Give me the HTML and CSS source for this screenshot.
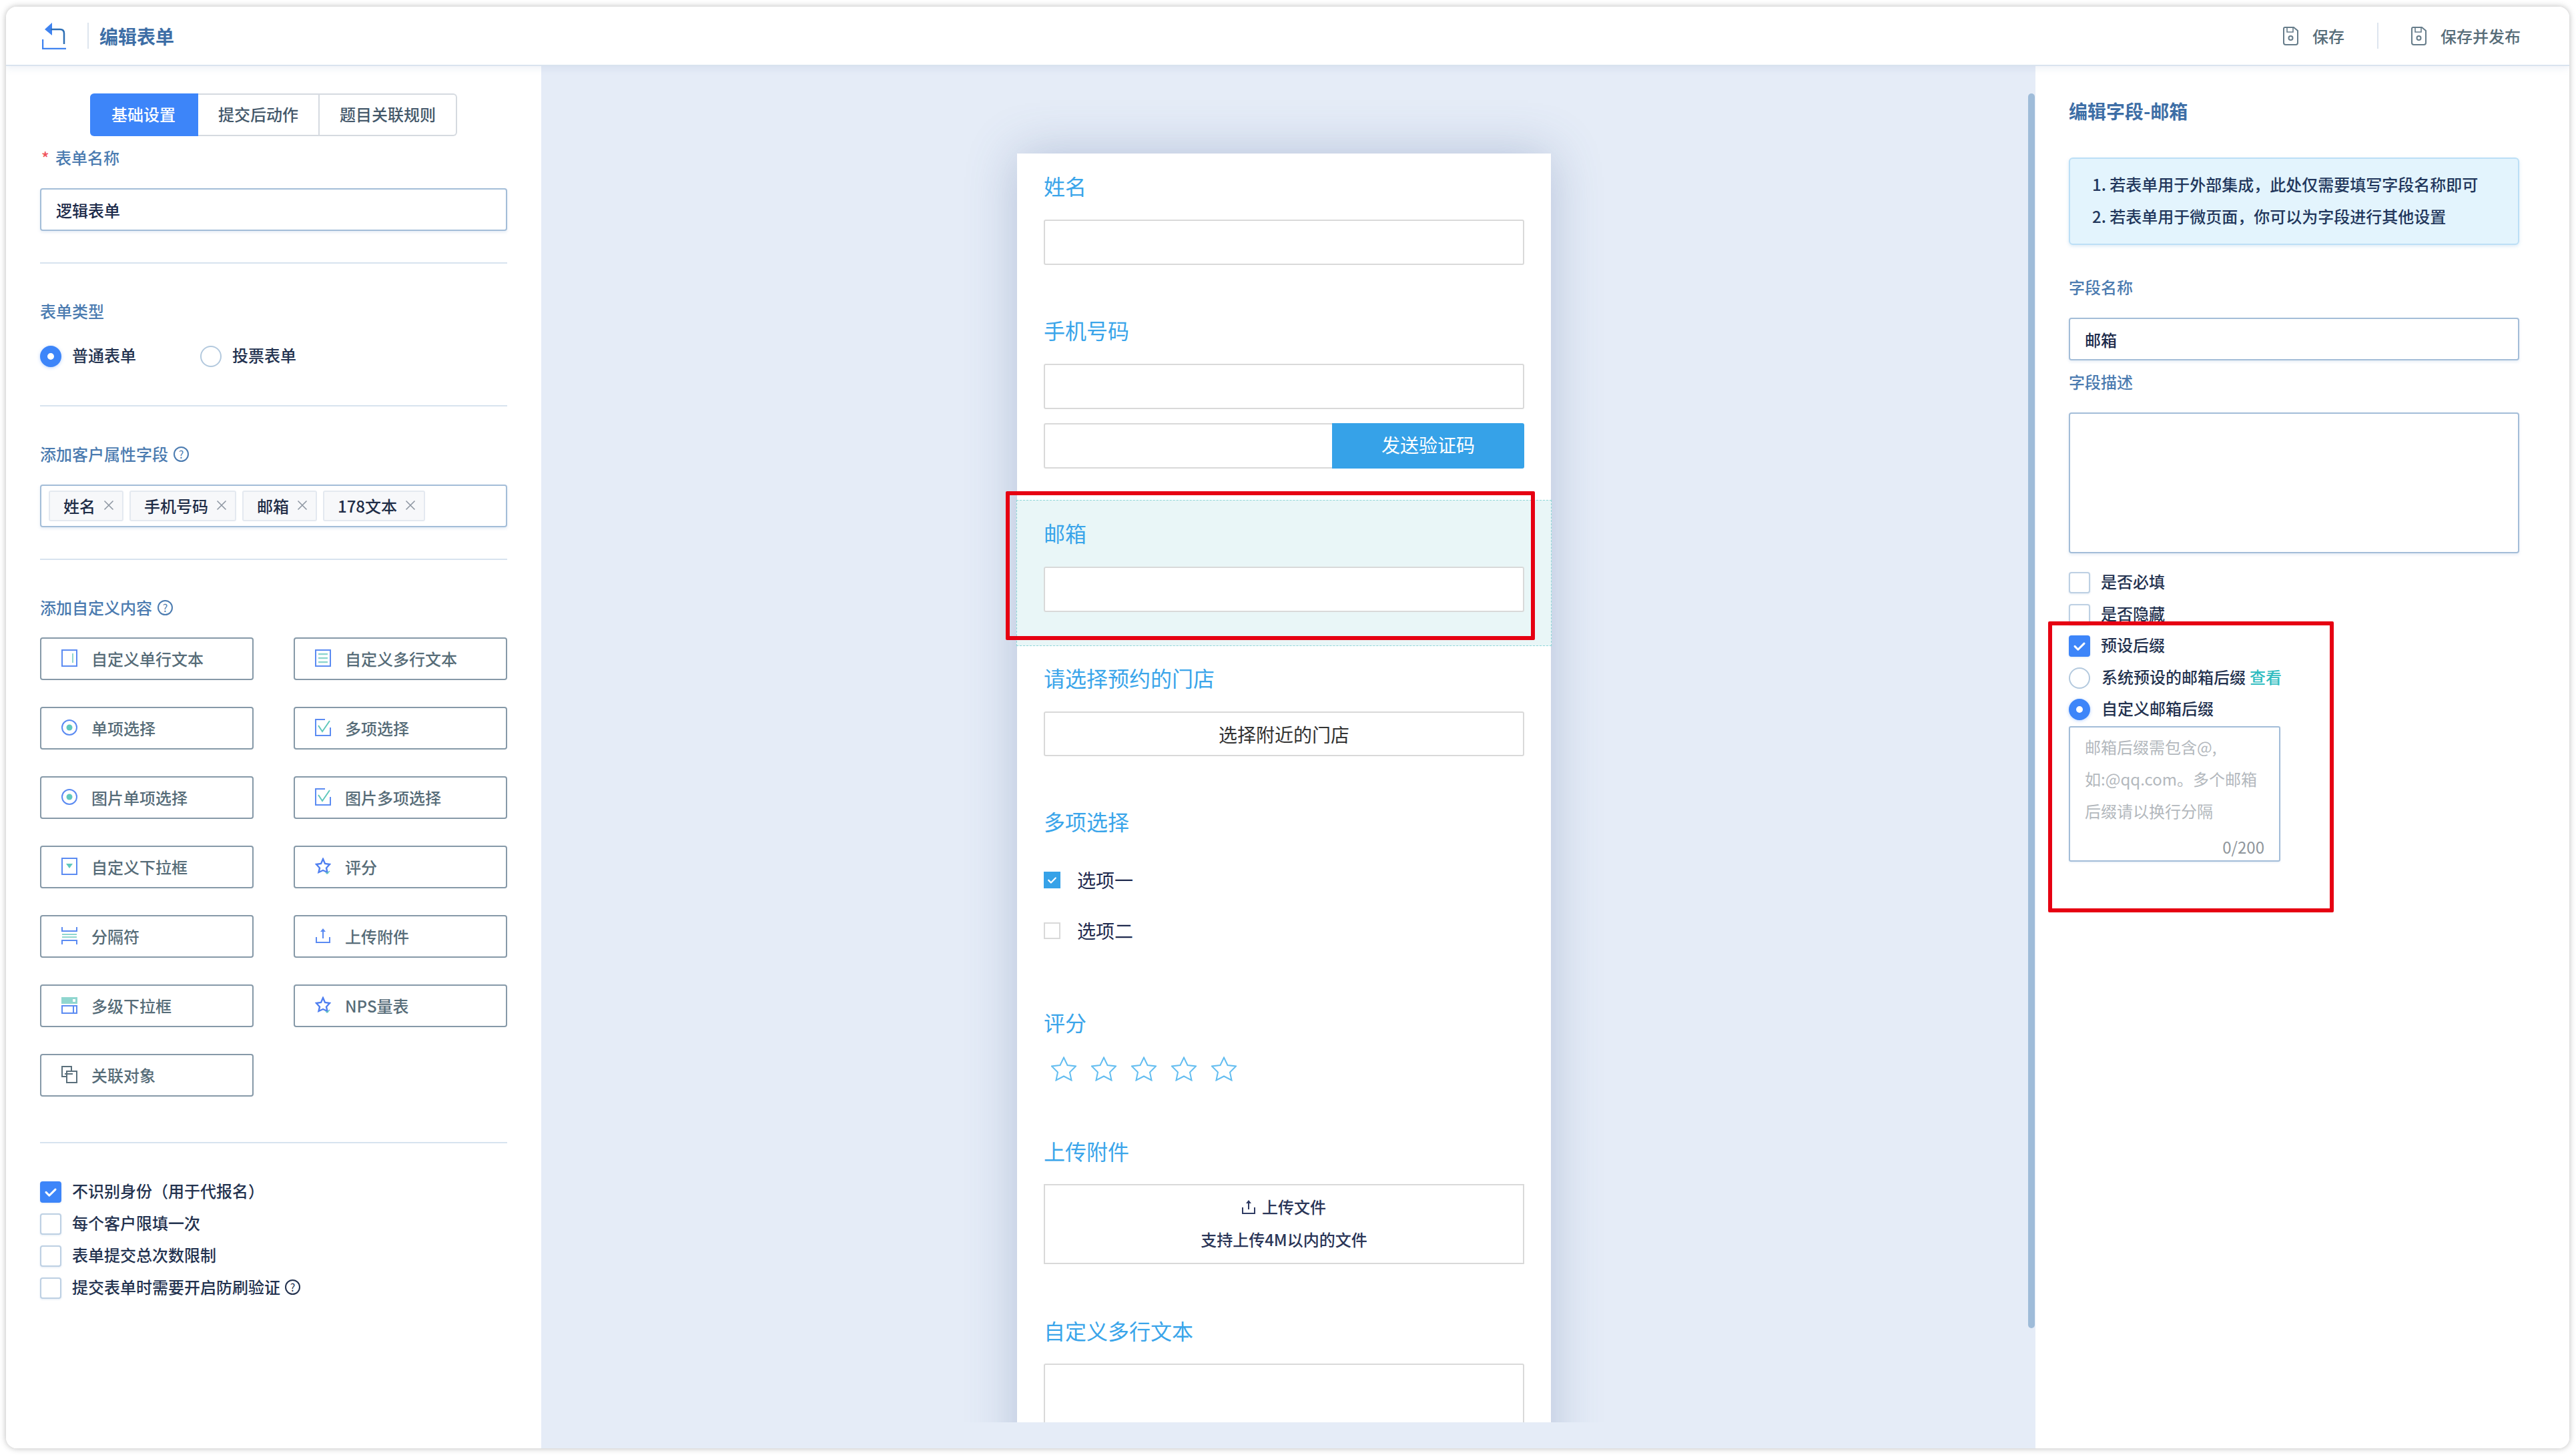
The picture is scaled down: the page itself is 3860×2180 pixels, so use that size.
FILE: index.html
```html
<!DOCTYPE html>
<html lang="zh-CN">
<head>
    <meta charset="UTF-8">
    <meta name="viewport" content="width=device-width, initial-scale=1.0">
    <title>编辑表单</title>
    <link rel="stylesheet" href="styles.css">
</head>
<body>
    <!-- 图标定义 -->
    <svg class="icon-defs" xmlns="http://www.w3.org/2000/svg">
        <symbol id="i-check" viewBox="0 0 32 32"><path d="M8 16.5l5.5 5.5L24 11.5" fill="none" stroke="#fff" stroke-width="3.5" stroke-linecap="round" stroke-linejoin="round"/></symbol>
        <symbol id="i-close" viewBox="0 0 16 16"><path d="M1.5 1.5l13 13M14.5 1.5l-13 13" fill="none" stroke="#8f98a3" stroke-width="1.6"/></symbol>
        <symbol id="i-save" viewBox="0 0 23 28"><path d="M3 1h13l6 5v18a3 3 0 0 1-3 3H4a3 3 0 0 1-3-3V3a2 2 0 0 1 2-2z" fill="none" stroke="#667c8a" stroke-width="2"/><path d="M6 2v6h9V2" fill="none" stroke="#667c8a" stroke-width="1.6"/><circle cx="11.5" cy="17" r="3" fill="none" stroke="#667c8a" stroke-width="2"/></symbol>
        <symbol id="i-text" viewBox="0 0 24 26"><rect x="1" y="1" width="22" height="24" fill="none" stroke="#5b8bf2" stroke-width="2"/><path d="M17 6v14" stroke="#8fd6cf" stroke-width="2"/></symbol>
        <symbol id="i-lines" viewBox="0 0 24 26"><rect x="1" y="1" width="22" height="24" fill="none" stroke="#5b8bf2" stroke-width="2"/><path d="M5 7h14M5 13h14M5 19h14" stroke="#8fd6cf" stroke-width="2.6"/></symbol>
        <symbol id="i-radio" viewBox="0 0 24 26"><circle cx="12" cy="13" r="11" fill="none" stroke="#5b8bf2" stroke-width="2"/><circle cx="12" cy="13" r="4.5" fill="#5fc7bd"/></symbol>
        <symbol id="i-multi" viewBox="0 0 24 26"><path d="M15 1H1v24h22V13" fill="none" stroke="#5b8bf2" stroke-width="2"/><path d="M5 10l6 9L22 3" fill="none" stroke="#5fc7bd" stroke-width="2"/></symbol>
        <symbol id="i-select" viewBox="0 0 24 26"><rect x="1" y="1" width="22" height="24" fill="none" stroke="#5b8bf2" stroke-width="2"/><path d="M7 9h10l-5 7z" fill="#5fc7bd"/></symbol>
        <symbol id="i-star" viewBox="0 0 24 26"><path d="M12 2l3 7 7 1-5 5.500 1.500 6.500-6.500-3-6.500 3L7 15.500 2 10l7-1z" fill="none" stroke="#4f7ff0" stroke-width="2.400"/><path d="M16 22l2 2 4-4" fill="none" stroke="#5fc7bd" stroke-width="1.500"/></symbol>
        <symbol id="i-split" viewBox="0 0 24 26"><path d="M1 0v6h22V0M1 26v-6h22v6" fill="none" stroke="#5b8bf2" stroke-width="2"/><path d="M1 11h22M1 15h22" stroke="#8fd6cf" stroke-width="2"/></symbol>
        <symbol id="i-upload" viewBox="0 0 24 26"><path d="M2 15v8h20v-8" fill="none" stroke="#5b8bf2" stroke-width="2"/><path d="M12 3v14" stroke="#5b8bf2" stroke-width="2"/><path d="M8 7l4-5 4 5z" fill="#5b8bf2"/></symbol>
        <symbol id="i-cascade" viewBox="0 0 24 26"><rect x="0" y="1" width="24" height="10" fill="#8fd6cf"/><rect x="17" y="4" width="4" height="4" fill="#fff"/><rect x="1" y="14" width="22" height="11" fill="none" stroke="#5b8bf2" stroke-width="2"/><path d="M18 15v9" stroke="#5b8bf2" stroke-width="2"/></symbol>
        <symbol id="i-link" viewBox="0 0 24 26"><path d="M15 8V1H1v15h7" fill="none" stroke="#5a6f7b" stroke-width="2"/><rect x="8" y="8" width="15" height="17" fill="none" stroke="#5a6f7b" stroke-width="2"/><path d="M5 12h12" stroke="#5a6f7b" stroke-width="2"/></symbol>
        <symbol id="i-rate" viewBox="0 0 38 37"><path d="M19 1.500L24.500 13 37 14.500 28 23.500 30.500 35.500 19 29.500 7.500 35.500 10 23.500 1 14.500 13.500 13z" fill="none" stroke="#63bdf0" stroke-width="2"/></symbol>
    </svg>

    <!-- 窗口 -->
    <div class="window">
        <!-- 顶部栏 -->
        <header class="topbar">
            <svg class="back-icon" viewBox="0 0 36 40">
                <path d="M1 25v14h35" fill="none" stroke="#3f83f0" stroke-width="2.500"/>
                <path d="M15 0L4 10l11 9z" fill="#3f83f0"/>
                <path d="M13 10h14q6 0 6 6v16" fill="none" stroke="#2e6fb5" stroke-width="2.500"/>
            </svg>
            <span class="topbar-line"></span>
            <h1 class="page-title">编辑表单</h1>
            <div class="topbar-actions">
                <a class="action"><svg class="save-icon"><use href="#i-save"/></svg>保存</a>
                <span class="topbar-line"></span>
                <a class="action"><svg class="save-icon"><use href="#i-save"/></svg>保存并发布</a>
            </div>
        </header>

        <div class="main">
            <!-- 左侧设置 -->
            <aside class="left-panel">
                <div class="tabs">
                    <span class="tab tab-active">基础设置</span>
                    <span class="tab">提交后动作</span>
                    <span class="tab">题目关联规则</span>
                </div>

                <div class="label name-label"><span class="required">*</span>表单名称</div>
                <div class="text-box">逻辑表单</div>
                <hr class="line">

                <div class="label">表单类型</div>
                <div class="type-row">
                    <label class="choice type-choice"><span class="radio radio-on"></span>普通表单</label>
                    <label class="choice type-choice"><span class="radio"></span>投票表单</label>
                </div>
                <hr class="line">

                <div class="label">添加客户属性字段 <span class="help">?</span></div>
                <div class="tag-box">
                    <span class="tag">姓名<svg class="close-icon"><use href="#i-close"/></svg></span>
                    <span class="tag">手机号码<svg class="close-icon"><use href="#i-close"/></svg></span>
                    <span class="tag">邮箱<svg class="close-icon"><use href="#i-close"/></svg></span>
                    <span class="tag">178文本<svg class="close-icon"><use href="#i-close"/></svg></span>
                </div>
                <hr class="line">

                <div class="label">添加自定义内容 <span class="help">?</span></div>
                <div class="widget-grid">
                    <div class="widget"><svg class="widget-icon"><use href="#i-text"/></svg>自定义单行文本</div>
                    <div class="widget"><svg class="widget-icon"><use href="#i-lines"/></svg>自定义多行文本</div>
                    <div class="widget"><svg class="widget-icon"><use href="#i-radio"/></svg>单项选择</div>
                    <div class="widget"><svg class="widget-icon"><use href="#i-multi"/></svg>多项选择</div>
                    <div class="widget"><svg class="widget-icon"><use href="#i-radio"/></svg>图片单项选择</div>
                    <div class="widget"><svg class="widget-icon"><use href="#i-multi"/></svg>图片多项选择</div>
                    <div class="widget"><svg class="widget-icon"><use href="#i-select"/></svg>自定义下拉框</div>
                    <div class="widget"><svg class="widget-icon"><use href="#i-star"/></svg>评分</div>
                    <div class="widget"><svg class="widget-icon"><use href="#i-split"/></svg>分隔符</div>
                    <div class="widget"><svg class="widget-icon"><use href="#i-upload"/></svg>上传附件</div>
                    <div class="widget"><svg class="widget-icon"><use href="#i-cascade"/></svg>多级下拉框</div>
                    <div class="widget"><svg class="widget-icon"><use href="#i-star"/></svg>NPS量表</div>
                    <div class="widget"><svg class="widget-icon"><use href="#i-link"/></svg>关联对象</div>
                </div>
                <hr class="line line-wide">

                <div class="check-list">
                    <label class="choice"><span class="check check-on"><svg><use href="#i-check"/></svg></span>不识别身份（用于代报名）</label>
                    <label class="choice"><span class="check"></span>每个客户限填一次</label>
                    <label class="choice"><span class="check"></span>表单提交总次数限制</label>
                    <label class="choice"><span class="check"></span>提交表单时需要开启防刷验证 <span class="help help-dark">?</span></label>
                </div>
            </aside>

            <!-- 中间预览 -->
            <section class="canvas">
                <div class="canvas-scroll">
                    <div class="phone-card">
                        <div class="field field-first">
                            <div class="field-title">姓名</div>
                            <div class="field-input"></div>
                        </div>
                        <div class="field field-phone">
                            <div class="field-title">手机号码</div>
                            <div class="field-input"></div>
                            <div class="code-row">
                                <div class="code-input"></div>
                                <div class="code-btn">发送验证码</div>
                            </div>
                        </div>
                        <div class="field field-selected">
                            <div class="field-title">邮箱</div>
                            <div class="field-input"></div>
                        </div>
                        <div class="field field-store">
                            <div class="field-title">请选择预约的门店</div>
                            <div class="store-btn">选择附近的门店</div>
                        </div>
                        <div class="field field-multi">
                            <div class="field-title">多项选择</div>
                            <div class="option-list">
                                <div class="option"><span class="box box-on"><svg><use href="#i-check"/></svg></span>选项一</div>
                                <div class="option"><span class="box"></span>选项二</div>
                            </div>
                        </div>
                        <div class="field field-rate">
                            <div class="field-title">评分</div>
                            <div class="stars">
                                <svg class="star"><use href="#i-rate"/></svg>
                                <svg class="star"><use href="#i-rate"/></svg>
                                <svg class="star"><use href="#i-rate"/></svg>
                                <svg class="star"><use href="#i-rate"/></svg>
                                <svg class="star"><use href="#i-rate"/></svg>
                            </div>
                        </div>
                        <div class="field field-upload">
                            <div class="field-title">上传附件</div>
                            <div class="upload-box">
                                <div class="upload-title">
                                    <svg class="upload-icon" viewBox="0 0 20 24"><path d="M1 13v9h18v-9" fill="none" stroke="#2f3b63" stroke-width="2"/><path d="M10 3v13" stroke="#2f3b63" stroke-width="2"/><path d="M6 7l4-5 4 5z" fill="#2f3b63"/></svg>
                                    上传文件
                                </div>
                                <div>支持上传4M以内的文件</div>
                            </div>
                        </div>
                        <div class="field field-upload">
                            <div class="field-title">自定义多行文本</div>
                            <div class="field-input area-input"></div>
                        </div>
                    </div>
                </div>
                <div class="scrollbar"></div>
            </section>

            <!-- 右侧字段编辑 -->
            <aside class="right-panel">
                <h2 class="edit-title">编辑字段-邮箱</h2>
                <div class="notice">
                    <div>1. 若表单用于外部集成，此处仅需要填写字段名称即可</div>
                    <div>2. 若表单用于微页面，你可以为字段进行其他设置</div>
                </div>

                <div class="label field-name-label">字段名称</div>
                <div class="text-box">邮箱</div>
                <div class="label field-desc-label">字段描述</div>
                <div class="text-box desc-box"></div>

                <div class="field-options">
                    <label class="choice"><span class="check"></span>是否必填</label>
                    <label class="choice"><span class="check"></span>是否隐藏</label>
                    <label class="choice"><span class="check check-on"><svg><use href="#i-check"/></svg></span>预设后缀</label>
                    <label class="choice choice-radio"><span class="radio"></span>系统预设的邮箱后缀 <a class="view-link">查看</a></label>
                    <label class="choice choice-radio"><span class="radio radio-on"></span>自定义邮箱后缀</label>
                </div>
                <div class="suffix-box">
                    <div class="suffix-hint">邮箱后缀需包含@,<br>如:@qq.com。多个邮箱<br>后缀请以换行分隔</div>
                    <div class="suffix-count">0/200</div>
                </div>
            </aside>
        </div>

        <!-- 红色标注框 -->
        <div class="mark mark-email"></div>
        <div class="mark mark-suffix"></div>
    </div>
</body>
</html>
```

FILE: styles.css
```css
/* 基础 */
* {
    box-sizing: border-box;
}

html, body {
    margin: 0;
    height: 2180px;
    overflow: hidden;
    background: #fff;
}

body {
    font-family: "Noto Sans CJK SC", "Noto Sans", sans-serif;
    font-size: 24px;
    color: #23324f;
}

.icon-defs {
    display: none;
}

/* 窗口 */
.window {
    position: relative;
    width: 3841px;
    height: 2160px;
    margin: 10px 0 0 9px;
    display: flex;
    flex-direction: column;
    background: #fff;
    border-radius: 16px;
    overflow: hidden;
    box-shadow: 0 0 10px rgba(0, 0, 0, 0.28);
}

/* 顶部栏 */
.topbar {
    flex: none;
    height: 89px;
    display: flex;
    align-items: center;
    padding: 0 73px 0 54px;
    border-bottom: 2px solid #d9e3ef;
    box-shadow: 0 4px 10px rgba(120, 150, 190, 0.12);
    position: relative;
    z-index: 2;
    background: #fff;
}

.back-icon {
    width: 36px;
    height: 40px;
    margin-right: 32px;
}

.topbar-line {
    width: 2px;
    height: 39px;
    background: #dde5ee;
}

.page-title {
    margin: 0 0 0 16px;
    font-size: 28px;
    line-height: 40px;
    font-weight: 700;
    color: #3d6ea6;
}

.topbar-actions {
    margin-left: auto;
    display: flex;
    align-items: center;
    gap: 49px;
}

.action {
    display: flex;
    align-items: center;
    gap: 21px;
    color: #566c78;
    font-weight: 500;
}

.save-icon {
    width: 23px;
    height: 28px;
}

/* 三栏 */
.main {
    flex: 1;
    display: flex;
    min-height: 0;
}

.left-panel {
    flex: none;
    width: 802px;
    padding: 41px 51px 0;
    background: #fff;
}

.canvas {
    flex: 1;
    position: relative;
    display: flex;
    flex-direction: column;
    padding: 0 13px 39px 0;
    background: #e5ecf7;
}

.right-panel {
    flex: none;
    width: 800px;
    padding: 49px 75px 0 50px;
    background: #fff;
}

/* 左侧表单控件 */
.tabs {
    display: flex;
    justify-content: center;
    height: 64px;
}

.tab {
    display: flex;
    align-items: center;
    padding: 0 30px 3px;
    border: 2px solid #d5dae0;
    border-left: 0;
    color: #44586a;
    font-weight: 500;
}

.tab:last-child {
    border-radius: 0 6px 6px 0;
}

.tab-active {
    background: #3d85f9;
    border-color: #3d85f9;
    border-radius: 6px 0 0 6px;
    color: #fff;
    padding: 0 32px 3px;
}

.label {
    display: flex;
    align-items: center;
    gap: 8px;
    line-height: 32px;
    margin-top: 55px;
    padding-bottom: 2px;
    color: #4b7bb0;
    font-weight: 500;
}

.name-label {
    margin-top: 16px;
    gap: 0;
}

.required {
    color: #f0555c;
    width: 23px;
    padding-left: 2px;
}

.help {
    flex: none;
    display: inline-block;
    width: 23px;
    height: 23px;
    border: 2px solid currentColor;
    border-radius: 50%;
    font-size: 16px;
    line-height: 19px;
    text-align: center;
    font-weight: 400;
}

.help-dark {
    margin: 3px 0 0 -9px;
}

.text-box {
    height: 64px;
    margin-top: 28px;
    padding: 0 22px;
    display: flex;
    align-items: center;
    border: 2px solid #a3bdd8;
    border-radius: 4px;
    box-shadow: 0 2px 4px rgba(110, 150, 200, 0.18);
    color: #1c2a4a;
    font-weight: 500;
}

.line {
    margin: 47px 0 0;
    border: 0;
    height: 2px;
    background: #d7e3ef;
}

.line-wide {
    margin-top: 68px;
}

.type-row {
    display: flex;
    margin: 34px 0 57px;
}

.type-row + .line {
    margin-top: 0;
}

.choice {
    display: flex;
    align-items: flex-start;
    gap: 16px;
    height: 32px;
    line-height: 28px;
    color: #23324f;
    font-weight: 500;
}

.type-choice {
    width: 240px;
}

.radio {
    flex: none;
    width: 32px;
    height: 32px;
    border: 2px solid #b3c9de;
    border-radius: 50%;
    background: #fff;
}

.radio-on {
    border: 11px solid #3d85f9;
    box-shadow: 0 1px 5px rgba(61, 133, 249, 0.35);
}

.check {
    flex: none;
    width: 32px;
    height: 32px;
    border: 2px solid #bdd0e3;
    border-radius: 4px;
    background: #fff;
    box-shadow: 0 1px 3px rgba(110, 150, 200, 0.2);
}

.check-on {
    background: #3d85f9;
    border-color: #3d85f9;
}

.check svg {
    display: block;
    width: 28px;
    height: 28px;
}

.tag-box {
    height: 64px;
    margin-top: 28px;
    padding: 7px 11px;
    display: flex;
    gap: 9px;
    border: 2px solid #a3bdd8;
    border-radius: 4px;
    box-shadow: 0 2px 4px rgba(110, 150, 200, 0.18);
}

.tag {
    height: 46px;
    display: flex;
    align-items: center;
    gap: 12px;
    padding: 0 12px 2px 20px;
    border: 2px solid #e4e9f0;
    border-radius: 3px;
    background: #f7f8fa;
    color: #1f2d47;
    font-weight: 500;
}

.close-icon {
    width: 16px;
    height: 16px;
}

.widget-grid {
    display: grid;
    grid-template-columns: 320px 320px;
    grid-auto-rows: 64px;
    gap: 40px 60px;
    margin-top: 27px;
}

.widget {
    display: flex;
    align-items: center;
    gap: 21px;
    padding: 0 0 2px 30px;
    border: 2px solid #8699a8;
    border-radius: 4px;
    color: #566c78;
    font-weight: 500;
}

.widget-icon {
    width: 24px;
    height: 26px;
}

.check-list {
    display: flex;
    flex-direction: column;
    gap: 16px;
    margin-top: 57px;
}

/* 中间预览 */
.canvas-scroll {
    flex: 1;
    min-height: 0;
    overflow: hidden;
    padding-top: 131px;
    display: flex;
    justify-content: center;
}

.phone-card {
    width: 800px;
    padding: 0 40px;
    height: 2100px;
    background: #fff;
    box-shadow: 0 0 70px rgba(70, 95, 150, 0.3);
}

.field-title {
    font-size: 32px;
    line-height: 42px;
    padding-bottom: 4px;
    color: #3aa5ea;
}

.field-input {
    height: 68px;
    margin-top: 26px;
    border: 2px solid #d9d9d9;
    border-radius: 3px;
    background: #fff;
}

.field-first {
    padding-top: 27px;
}

.field-phone {
    margin-top: 76px;
}

.code-row {
    display: flex;
    height: 68px;
    margin-top: 21px;
}

.code-input {
    flex: 1;
    border: 2px solid #d9d9d9;
    border-right: 0;
    border-radius: 3px 0 0 3px;
}

.code-btn {
    width: 288px;
    display: flex;
    align-items: center;
    justify-content: center;
    padding-bottom: 5px;
    border-radius: 0 3px 3px 0;
    background: #36a2e8;
    color: #fff;
    font-size: 28px;
}

.field-selected {
    margin: 47px -41px 0;
    padding: 27px 40px 50px;
    height: 219px;
    border: 1px dashed #8fd6d8;
    background: #e9f6f7;
}

.field-store {
    margin-top: 26px;
}

.store-btn {
    height: 67px;
    margin-top: 26px;
    display: flex;
    align-items: center;
    justify-content: center;
    border: 2px solid #d9d9d9;
    border-radius: 3px;
    font-size: 28px;
    color: #333;
}

.field-multi {
    margin-top: 76px;
}

.option-list {
    display: flex;
    flex-direction: column;
    gap: 30px;
    margin-top: 40px;
}

.option {
    display: flex;
    align-items: center;
    gap: 25px;
    height: 46px;
    font-size: 28px;
    color: #1f2a4d;
}

.box {
    flex: none;
    width: 25px;
    height: 25px;
    border: 2px solid #d9d9d9;
    background: #fff;
}

.box-on {
    background: #36a2e8;
    border-color: #36a2e8;
}

.box svg {
    display: block;
    width: 21px;
    height: 21px;
}

.field-rate {
    margin-top: 93px;
}

.stars {
    display: flex;
    gap: 22px;
    margin: 27px 0 0 11px;
}

.star {
    width: 38px;
    height: 37px;
}

.field-upload {
    margin-top: 83px;
}

.field-upload + .field-upload {
    margin-top: 78px;
}

.upload-box {
    height: 120px;
    margin-top: 25px;
    display: flex;
    flex-direction: column;
    align-items: center;
    justify-content: center;
    gap: 15px;
    padding-bottom: 4px;
    border: 2px solid #d9d9d9;
    line-height: 34px;
    color: #2a3557;
    font-weight: 500;
}

.upload-title {
    display: flex;
    align-items: center;
    gap: 10px;
}

.upload-icon {
    width: 20px;
    height: 24px;
}

.area-input {
    height: 200px;
    margin-top: 25px;
}

.scrollbar {
    position: absolute;
    top: 41px;
    right: 1px;
    width: 10px;
    height: 1850px;
    border-radius: 5px;
    background: #9fbcd9;
}

/* 右侧字段编辑 */
.edit-title {
    margin: 0;
    font-size: 28px;
    line-height: 36px;
    padding-bottom: 4px;
    font-weight: 700;
    color: #3d6ea6;
}

.notice {
    height: 131px;
    margin-top: 48px;
    padding: 14px 0 0 33px;
    border: 2px solid #bcdff6;
    border-radius: 6px;
    background: #e3f4fd;
    line-height: 48px;
    color: #22375c;
    box-shadow: 0 2px 5px rgba(110, 170, 220, 0.25);
    font-weight: 500;
}

.field-name-label {
    margin-top: 47px;
}

.field-desc-label {
    margin-top: 16px;
}

.desc-box {
    height: 211px;
}

.field-options {
    display: flex;
    flex-direction: column;
    gap: 15.5px;
    margin-top: 28px;
}

.choice-radio {
    gap: 17px;
}

.view-link {
    color: #2fbcc0;
    margin-left: -11px;
}

.suffix-box {
    width: 317px;
    height: 203px;
    margin-top: 9px;
    padding: 5px 22px 0;
    border: 2px solid #a3bdd8;
    border-radius: 3px;
    box-shadow: 0 1px 3px rgba(110, 150, 200, 0.18);
}

.suffix-hint {
    line-height: 48px;
    color: #b3b8bd;
    white-space: nowrap;
}

.suffix-count {
    margin-top: 13px;
    line-height: 34px;
    text-align: right;
    color: #8f969c;
}

/* 红色标注框 */
.mark {
    position: absolute;
    z-index: 3;
    border: 6px solid #e60012;
    border-radius: 2px;
}

.mark-email {
    left: 1498px;
    top: 726px;
    width: 793px;
    height: 223px;
}

.mark-suffix {
    left: 3060px;
    top: 921px;
    width: 428px;
    height: 436px;
}
```
